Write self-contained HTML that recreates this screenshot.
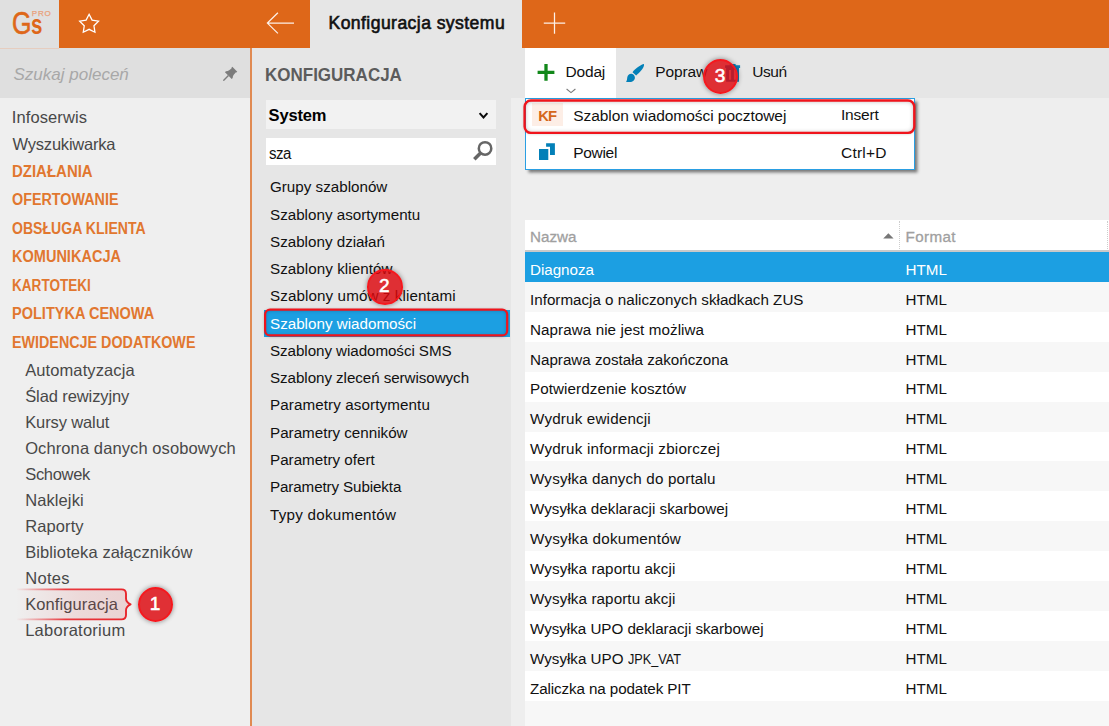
<!DOCTYPE html>
<html lang="pl">
<head>
<meta charset="utf-8">
<title>Konfiguracja systemu</title>
<style>
html,body{margin:0;padding:0}
body{width:1109px;height:726px;overflow:hidden;position:relative;background:#eeeeee;font-family:"Liberation Sans",sans-serif;color:#000}
.a{position:absolute}
.t{position:absolute;white-space:nowrap;line-height:20px;height:20px}
/* left menu */
.lm{font-size:16.5px;color:#484848;letter-spacing:0.1px}
.lh{font-size:15.6px;font-weight:700;color:#e1772f;transform-origin:0 0}
/* middle list */
.ml{font-size:15.2px;color:#111;left:270px}
.tb{font-size:15.5px;color:#111}
.dd{font-size:15.5px;color:#111;letter-spacing:-0.05px}
.circ{width:31.5px;height:31.5px;border-radius:50%;background:rgba(221,6,12,0.82);border:2px solid #f5181e;box-shadow:0 0 5px rgba(0,0,0,0.45);color:#fff;font-weight:400;-webkit-text-stroke:0.55px #fff;font-size:19px;line-height:31.5px;text-align:center}
/* table */
.tr{position:absolute;left:525px;width:584px;height:30px}
.tc{font-size:15.2px;color:#111}
.th{font-size:15.2px;color:#a0a0a0;-webkit-text-stroke:0.3px #a0a0a0}
</style>
</head>
<body>
<!-- ===== top bar ===== -->
<div class="a" id="topbar" style="left:0;top:0;width:1109px;height:48px;background:#de6719"></div>
<div class="a" id="logobox" style="left:0;top:0;width:59px;height:48px;background:#e0e0e0"></div>
<div class="a" id="tab" style="left:310px;top:0;width:212px;height:48px;background:#e6e6e6"></div>


<!-- logo -->
<div class="t" id="logoG" style="left:11.6px;top:6.2px;font-size:30.5px;line-height:34px;height:34px;color:#de6719;-webkit-text-stroke:0.6px #de6719;transform:scaleX(0.82);transform-origin:0 0">G</div>
<div class="t" id="logoS" style="left:31px;top:7.7px;font-size:27px;font-weight:700;line-height:34px;height:34px;color:#de6719;transform:scaleX(0.76);transform-origin:0 0">s</div>
<div class="t" id="logoPRO" style="left:31.8px;top:9.3px;font-size:8px;line-height:10px;height:10px;color:#e9a079;-webkit-text-stroke:0.25px #e9a079;letter-spacing:0.8px">PRO</div>
<!-- star -->
<svg class="a" style="left:76px;top:10px" width="26" height="26" viewBox="0 0 26 26"><polygon points="13.10,4.30 16.10,10.07 22.52,11.14 17.95,15.78 18.92,22.21 13.10,19.30 7.28,22.21 8.25,15.78 3.68,11.14 10.10,10.07" fill="none" stroke="#fff" stroke-width="1.3" stroke-linejoin="miter"/></svg>
<!-- back arrow -->
<svg class="a" style="left:264px;top:10px" width="32" height="26" viewBox="0 0 32 26"><path d="M30 13.1H3.6M13.9 2.8L3.4 13.1l10.500 10.300" fill="none" stroke="#fdf0e8" stroke-width="1.25"/></svg>
<div class="t" id="tabtxt" style="left:328.5px;top:12.9px;font-size:17.6px;letter-spacing:0.42px;color:#101010;-webkit-text-stroke:0.6px #101010">Konfiguracja systemu</div>
<!-- plus -->
<svg class="a" style="left:540px;top:9px" width="28" height="28" viewBox="0 0 28 28"><path d="M14.5 3.4v21.400M3.800 14.050h21.400" fill="none" stroke="#fdf0e8" stroke-width="1.25"/></svg>

<!-- ===== left panel ===== -->
<div class="a" id="leftsearch" style="left:0;top:48px;width:250px;height:50px;background:#dfdfdf"></div>
<div class="a" style="left:0;top:48px;width:59px;height:1px;background:#e6cdbf"></div>
<div class="a" id="leftpanel" style="left:0;top:98px;width:250px;height:628px;background:#efefef"></div>
<div class="a" id="vline" style="left:250px;top:48px;width:2px;height:678px;background:#e08a52"></div>

<!-- left panel content -->
<div class="t" id="srch" style="left:13.5px;top:64.9px;font-size:17px;font-style:italic;color:#a8a8a8">Szukaj poleceń</div>
<svg class="a" id="pin" style="left:219.500px;top:65.900px" width="18" height="18" viewBox="0 0 18 18"><g transform="rotate(45 9 9)" fill="#7c7c7c"><path d="M5.500 0.800h7v1.300h-.6C11.900 4.800 12 6.900 13.800 8.600v1.300H4.200v-1.300C6 6.900 6.100 4.800 6.100 2.100H5.500z"/><path d="M8.300 9.800h1.400v6.600L9 17.400l-.7-1z"/></g></svg>
<div class="t lm" style="left:11.8px;top:106.9px">Infoserwis</div>
<div class="t lm" style="left:12.6px;top:133.7px;letter-spacing:-0.22px">Wyszukiwarka</div>
<div class="t lh" style="left:11.9px;top:161.6px;transform:scaleX(0.9600)">DZIAŁANIA</div>
<div class="t lh" style="left:11.9px;top:190.3px;transform:scaleX(0.9192)">OFERTOWANIE</div>
<div class="t lh" style="left:11.9px;top:218.8px;transform:scaleX(0.9022)">OBSŁUGA KLIENTA</div>
<div class="t lh" style="left:11.9px;top:247.4px;transform:scaleX(0.9316)">KOMUNIKACJA</div>
<div class="t lh" style="left:11.9px;top:275.8px;transform:scaleX(0.8697)">KARTOTEKI</div>
<div class="t lh" style="left:11.9px;top:304.4px;transform:scaleX(0.9311)">POLITYKA CENOWA</div>
<div class="t lh" style="left:11.9px;top:333.2px;transform:scaleX(0.9179)">EWIDENCJE DODATKOWE</div>
<div class="t lm" style="left:25.2px;top:360.1px">Automatyzacja</div>
<div class="t lm" style="left:25.2px;top:386.1px;letter-spacing:-0.1px">Ślad rewizyjny</div>
<div class="t lm" style="left:25.2px;top:412.1px;letter-spacing:-0.12px">Kursy walut</div>
<div class="t lm" style="left:25.2px;top:438.1px">Ochrona danych osobowych</div>
<div class="t lm" style="left:25.2px;top:464.1px;letter-spacing:-0.3px">Schowek</div>
<div class="t lm" style="left:25.2px;top:490.1px">Naklejki</div>
<div class="t lm" style="left:25.2px;top:516.1px">Raporty</div>
<div class="t lm" style="left:25.2px;top:542.1px">Biblioteka załączników</div>
<div class="t lm" style="left:25.2px;top:568.1px;letter-spacing:0.3px">Notes</div>
<div class="t lm" style="left:25.2px;top:594.1px">Konfiguracja</div>
<div class="t lm" style="left:25.2px;top:620.1px;letter-spacing:0.25px">Laboratorium</div>

<!-- ===== middle panel ===== -->
<div class="a" id="midpanel" style="left:252px;top:48px;width:259px;height:678px;background:#e6e6e6"></div>
<div class="a" id="toolbar" style="left:511px;top:48px;width:598px;height:50px;background:#e6e6e6"></div>

<!-- middle content -->
<div class="t" id="mhead" style="left:264.6px;top:64.6px;font-size:18px;font-weight:700;color:#5c5c5c;transform:scaleX(0.944);transform-origin:0 0">KONFIGURACJA</div>
<div class="a" id="sysbox" style="left:266px;top:99.5px;width:230px;height:29px;background:#f2f2f2"></div>
<div class="t" id="systxt" style="left:268.6px;top:104.8px;font-size:16.5px;font-weight:700;color:#000;letter-spacing:-0.15px">System</div>
<svg class="a" style="left:476px;top:109px" width="16" height="12" viewBox="0 0 16 12"><path d="M3.600 4.100l3.900 4.300 3.900-4.300" fill="none" stroke="#0a0a0a" stroke-width="2"/></svg>
<div class="a" id="srchbox" style="left:266px;top:138px;width:230px;height:27.3px;background:#fff"></div>
<div class="t" id="szatxt" style="left:268.6px;top:144.0px;font-size:16px;color:#111;letter-spacing:-0.6px;transform:scaleX(0.94);transform-origin:0 0">sza</div>
<svg class="a" id="mag" style="left:471px;top:140px" width="24" height="22" viewBox="0 0 24 22"><circle cx="14.050" cy="8.400" r="6.250" fill="none" stroke="#666" stroke-width="2.500"/><path d="M9.800 12.700L3.300 19.200" stroke="#666" stroke-width="3.500"/></svg>
<div class="a" id="selrow" style="left:264px;top:310px;width:246px;height:26.7px;background:#1c9fe2"></div>
<div class="t ml" style="top:177.2px">Grupy szablonów</div>
<div class="t ml" style="top:204.5px">Szablony asortymentu</div>
<div class="t ml" style="top:231.8px">Szablony działań</div>
<div class="t ml" style="top:259.0px;letter-spacing:0.05px">Szablony klientów</div>
<div class="t ml" style="top:286.3px;letter-spacing:0.1px">Szablony umów z klientami</div>
<div class="t ml" style="top:313.6px;color:#fff">Szablony wiadomości</div>
<div class="t ml" style="top:340.9px;letter-spacing:-0.07px">Szablony wiadomości SMS</div>
<div class="t ml" style="top:368.1px;letter-spacing:-0.07px">Szablony zleceń serwisowych</div>
<div class="t ml" style="top:395.4px;letter-spacing:0.1px">Parametry asortymentu</div>
<div class="t ml" style="top:422.7px">Parametry cenników</div>
<div class="t ml" style="top:449.9px">Parametry ofert</div>
<div class="t ml" style="top:477.2px;letter-spacing:-0.12px">Parametry Subiekta</div>
<div class="t ml" style="top:504.5px;letter-spacing:0.25px">Typy dokumentów</div>
<div class="a" id="selredsh" style="left:265px;top:310px;width:242px;height:26px;border-radius:5px;box-shadow:inset 0 0 4px rgba(0,0,0,0.3), 0 0 3px 1px rgba(0,0,0,0.2)"></div>
<svg class="a" id="selred" style="left:260px;top:304px" width="254" height="38" viewBox="260 304 254 38"><rect x="265.100" y="309.600" width="242.100" height="25.800" rx="5" fill="none" stroke="#f0141c" stroke-width="2.200"/></svg>

<!-- toolbar -->
<div class="a" id="btnDodaj" style="left:525px;top:48px;width:91px;height:50px;background:#fff"></div>
<svg class="a" style="left:536px;top:62px" width="20" height="20" viewBox="0 0 20 20"><path d="M10 1.9v16.8M1.6 10.3h16.8" stroke="#12881a" stroke-width="3.3" fill="none"/></svg>
<div class="t tb" style="left:565.6px;top:62.3px;letter-spacing:-0.2px">Dodaj</div>
<svg class="a" style="left:565px;top:87px" width="12" height="8" viewBox="0 0 12 8"><path d="M1.6 2l4.4 3.6L10.4 2" fill="none" stroke="#7a7a7a" stroke-width="1.1"/></svg>
<svg class="a" id="brush" style="left:624px;top:62px" width="22" height="22" viewBox="0 0 22 22"><path d="M20 2.100C16.800 2.600 11 6.800 8.500 10.300L12.100 13.400C15.500 10.800 20.600 5.600 20 2.100Z" fill="#0380b8"/><path d="M7.700 11.800C9.500 12.200 10.800 13.700 10.900 15.400C11 18 8.700 19.900 6 19.900C4.400 20 2.800 20 2 19.700C3.200 18.600 3 16.800 3.300 15.200C3.800 12.800 5.700 11.400 7.700 11.800Z" fill="#0380b8"/></svg>
<div class="t tb" style="left:655.2px;top:62.2px;letter-spacing:-0.1px">Popraw</div>
<svg class="a" id="trash" style="left:723px;top:62px" width="20" height="22" viewBox="0 0 20 22"><path d="M6.800 1.900h5.800v1.400h4.500v2.600H2.100v-2.600H6.800z" fill="#0b80bb"/><path d="M3.100 5.900h12.900v13.900H3.100z M6 8v9.800h2.100V8z M10.900 8v9.800h2.100V8z" fill="#0b80bb" fill-rule="evenodd"/></svg>
<div class="t tb" style="left:752.2px;top:62.2px;letter-spacing:-0.4px">Usuń</div>
<div class="a" id="dd" style="left:525px;top:98px;width:388px;height:70px;background:#fff;border:1px solid #2a9fe3;box-shadow:2.5px 2.5px 3px rgba(0,0,0,0.5)"></div>
<div class="a" id="kfbox" style="left:531.8px;top:103.4px;width:31px;height:22.800px;background:#fdeee6"></div>
<div class="t" style="left:538.3px;top:105.5px;font-size:14.8px;font-weight:700;color:#d5661a;letter-spacing:-0.9px">KF</div>
<div class="t dd" style="left:573.2px;top:105.6px">Szablon wiadomości pocztowej</div>
<div class="t dd" style="left:841px;top:105.4px;letter-spacing:-0.2px">Insert</div>
<svg class="a" id="copyic" style="left:538px;top:142px" width="19" height="19" viewBox="0 0 19 19"><path d="M8.100 1.300H16.900V12.900H12V4.800H8.100Z" fill="#0380b8"/><rect x="1" y="7" width="9.300" height="11" fill="#0380b8"/></svg>
<div class="t dd" style="left:573.2px;top:143.3px;letter-spacing:-0.3px">Powiel</div>
<div class="t dd" style="left:841px;top:143.3px;letter-spacing:0.2px">Ctrl+D</div>
<div class="a" id="ddredsh" style="left:525px;top:101px;width:389px;height:32px;border-radius:6px;box-shadow:inset 0 0 5px rgba(0,0,0,0.32), 0 0 3px 1px rgba(0,0,0,0.2)"></div>
<svg class="a" id="ddred" style="left:520px;top:96px" width="400" height="42" viewBox="520 96 400 42"><rect x="524.600" y="100.500" width="389.700" height="32.400" rx="6.300" fill="none" stroke="#f0141c" stroke-width="2.400"/></svg>

<!-- table -->
<div class="a" id="tbg" style="left:524.5px;top:220px;width:585px;height:506px;background:#f7f7f7"></div>
<div class="a" id="thead" style="left:524.5px;top:220px;width:585px;height:30.5px;background:#fff"></div>
<div class="a" style="left:524.5px;top:250.3px;width:585px;height:1.6px;background:#c9c9c9"></div>
<div class="t th" style="left:530px;top:226.6px">Nazwa</div>
<div class="t th" style="left:905.5px;top:226.6px;letter-spacing:0.38px">Format</div>
<svg class="a" style="left:882.3px;top:232px" width="13" height="8" viewBox="0 0 13 8"><path d="M1.200 6.600L6.400 1.200l5.200 5.400z" fill="#777"/></svg>
<div class="a" style="left:899px;top:221px;width:0;height:28px;border-left:1px dotted #cdcdcd"></div>
<div class="a" style="left:899px;top:252px;width:1px;height:30px;background:rgba(255,255,255,0.3)"></div>
<div class="a" style="left:1107px;top:221px;width:0;height:28px;border-left:1px dotted #cdcdcd"></div>
<div class="a" style="left:524.5px;top:251.90px;width:585px;height:29.94px;background:#1c9fe2"></div>
<div class="t tc" style="left:530px;top:259.6px;letter-spacing:-0.03px;color:#fff">Diagnoza</div>
<div class="t tc" style="left:905.5px;top:259.6px;color:#fff">HTML</div>
<div class="t tc" style="left:530px;top:289.6px;letter-spacing:-0.00px">Informacja o naliczonych składkach ZUS</div>
<div class="t tc" style="left:905.5px;top:289.6px">HTML</div>
<div class="a" style="left:524.5px;top:311.78px;width:585px;height:29.94px;background:#fff"></div>
<div class="t tc" style="left:530px;top:319.5px;letter-spacing:0.08px">Naprawa nie jest możliwa</div>
<div class="t tc" style="left:905.5px;top:319.5px">HTML</div>
<div class="t tc" style="left:530px;top:349.5px;letter-spacing:-0.01px">Naprawa została zakończona</div>
<div class="t tc" style="left:905.5px;top:349.5px">HTML</div>
<div class="a" style="left:524.5px;top:371.66px;width:585px;height:29.94px;background:#fff"></div>
<div class="t tc" style="left:530px;top:379.4px;letter-spacing:0.08px">Potwierdzenie kosztów</div>
<div class="t tc" style="left:905.5px;top:379.4px">HTML</div>
<div class="t tc" style="left:530px;top:409.3px;letter-spacing:0.18px">Wydruk ewidencji</div>
<div class="t tc" style="left:905.5px;top:409.3px">HTML</div>
<div class="a" style="left:524.5px;top:431.54px;width:585px;height:29.94px;background:#fff"></div>
<div class="t tc" style="left:530px;top:439.3px;letter-spacing:0.20px">Wydruk informacji zbiorczej</div>
<div class="t tc" style="left:905.5px;top:439.3px">HTML</div>
<div class="t tc" style="left:530px;top:469.2px;letter-spacing:0.17px">Wysyłka danych do portalu</div>
<div class="t tc" style="left:905.5px;top:469.2px">HTML</div>
<div class="a" style="left:524.5px;top:491.42px;width:585px;height:29.94px;background:#fff"></div>
<div class="t tc" style="left:530px;top:499.2px;letter-spacing:0.03px">Wysyłka deklaracji skarbowej</div>
<div class="t tc" style="left:905.5px;top:499.2px">HTML</div>
<div class="t tc" style="left:530px;top:529.1px;letter-spacing:0.24px">Wysyłka dokumentów</div>
<div class="t tc" style="left:905.5px;top:529.1px">HTML</div>
<div class="a" style="left:524.5px;top:551.30px;width:585px;height:29.94px;background:#fff"></div>
<div class="t tc" style="left:530px;top:559.0px;letter-spacing:0.10px">Wysyłka raportu akcji</div>
<div class="t tc" style="left:905.5px;top:559.0px">HTML</div>
<div class="t tc" style="left:530px;top:589.0px;letter-spacing:0.10px">Wysyłka raportu akcji</div>
<div class="t tc" style="left:905.5px;top:589.0px">HTML</div>
<div class="a" style="left:524.5px;top:611.18px;width:585px;height:29.94px;background:#fff"></div>
<div class="t tc" style="left:530px;top:618.9px;letter-spacing:-0.03px">Wysyłka UPO deklaracji skarbowej</div>
<div class="t tc" style="left:905.5px;top:618.9px">HTML</div>
<div class="t tc" style="left:530px;top:648.9px">Wysyłka UPO <span style="display:inline-block;transform:scaleX(0.835);transform-origin:0 50%">JPK_VAT</span></div>
<div class="t tc" style="left:905.5px;top:648.9px">HTML</div>
<div class="a" style="left:524.5px;top:671.06px;width:585px;height:29.94px;background:#fff"></div>
<div class="t tc" style="left:530px;top:678.8px;letter-spacing:-0.10px">Zaliczka na podatek PIT</div>
<div class="t tc" style="left:905.5px;top:678.8px">HTML</div>

<!-- annotations -->
<svg class="a" id="brace" style="left:10px;top:580px" width="130" height="50" viewBox="10 580 130 50">
<defs>
<linearGradient id="bg1" gradientUnits="userSpaceOnUse" x1="16" y1="0" x2="126" y2="0"><stop offset="0" stop-color="#e8262c" stop-opacity="0"/><stop offset="0.45" stop-color="#e8262c" stop-opacity="0.9"/><stop offset="1" stop-color="#e8262c" stop-opacity="1"/></linearGradient>
<linearGradient id="bg2" gradientUnits="userSpaceOnUse" x1="16" y1="0" x2="126" y2="0"><stop offset="0" stop-color="#e03a3a" stop-opacity="0"/><stop offset="0.6" stop-color="#d84040" stop-opacity="0.13"/><stop offset="1" stop-color="#d04040" stop-opacity="0.16"/></linearGradient>
</defs>
<path d="M17 589.400H121.500Q126 589.400 126 593.800V598.500Q126 602.200 130.600 604.400Q126 606.600 126 610.300V615Q126 619.400 121.500 619.400H17" fill="url(#bg2)" stroke="url(#bg1)" stroke-width="1.900" stroke-linejoin="round"/>
</svg>
<div class="a circ" style="left:137.9px;top:586.9px"><span style="position:relative;left:-0.6px;top:-0.6px">1</span></div>
<div class="a circ" style="left:367.0px;top:269.2px"><span style="position:relative;left:-0.4px;top:-0.8px">2</span></div>
<div class="a circ" style="left:702.8px;top:58.7px"><span style="position:relative;left:-0.4px;top:-0.4px">3</span></div>

</body>
</html>
